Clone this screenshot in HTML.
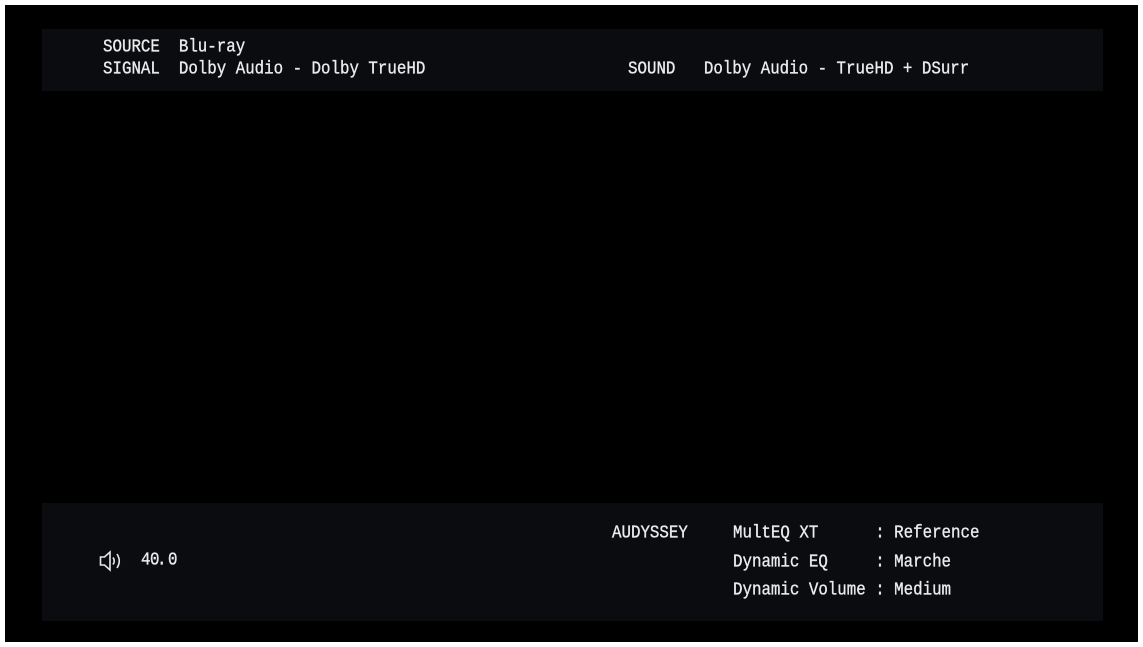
<!DOCTYPE html>
<html><head><meta charset="utf-8"><style>
html,body{margin:0;padding:0;background:#fff;width:1143px;height:647px;overflow:hidden}
#scr{position:absolute;left:5px;top:5px;width:1133px;height:637px;background:#000}
.p{position:absolute;background:#0b0c10}
.t{position:absolute;color:#ececec;font-family:"Liberation Mono",monospace;font-size:15.8px;line-height:18px;white-space:pre;transform:scaleY(1.18);transform-origin:left center;-webkit-text-stroke:0.3px #ececec}
</style></head><body>
<div id="scr"></div>
<div class="p" style="left:42px;top:29px;width:1061px;height:62px"></div>
<div class="p" style="left:42px;top:503px;width:1061px;height:118px"></div>
<div class="t" style="left:103px;top:38px">SOURCE  Blu-ray</div>
<div class="t" style="left:103px;top:60px">SIGNAL  Dolby Audio - Dolby TrueHD</div>
<div class="t" style="left:628px;top:60px">SOUND   Dolby Audio - TrueHD + DSurr</div>
<div class="t" style="left:612px;top:524px">AUDYSSEY</div>
<div class="t" style="left:733px;top:524px">MultEQ XT      : Reference</div>
<div class="t" style="left:733px;top:553px">Dynamic EQ     : Marche</div>
<div class="t" style="left:733px;top:581px">Dynamic Volume : Medium</div>
<div class="t" style="left:141px;top:551px">4</div>
<div class="t" style="left:150px;top:551px">0</div>
<div class="t" style="left:157px;top:551px">.</div>
<div class="t" style="left:168px;top:551px">0</div>
<svg style="position:absolute;left:99px;top:550px" width="24" height="22" viewBox="0 0 24 22">
<path d="M1.5 7H5.5L11 2V20L5.5 15H1.5Z" fill="none" stroke="#e8e8e8" stroke-width="1.6"/>
<path d="M14 7.5Q16.5 11 14 14.5" fill="none" stroke="#e8e8e8" stroke-width="1.6"/>
<path d="M18 4Q22.5 11 18 18" fill="none" stroke="#e8e8e8" stroke-width="1.6"/>
</svg>
</body></html>
